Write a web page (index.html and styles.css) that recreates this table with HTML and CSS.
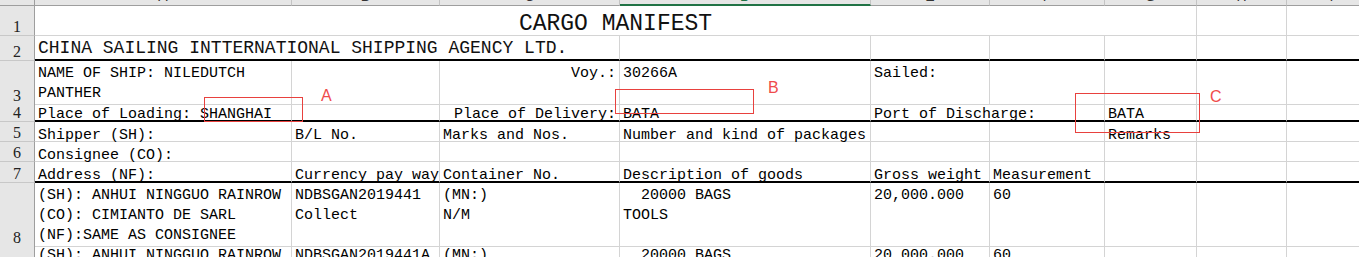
FILE: index.html
```html
<!DOCTYPE html>
<html>
<head>
<meta charset="utf-8">
<title>Cargo Manifest</title>
<link rel="stylesheet" href="styles.css">
</head>
<body>
<div class="sheet">
  <div class="row colhead">
    <div class="corner"></div>
    <div class="ch">A</div><div class="ch">B</div><div class="ch">C</div><div class="ch sel">D</div><div class="ch">E</div><div class="ch">F</div><div class="ch">G</div><div class="ch">H</div><div class="ch">I</div>
  </div>

  <div class="row r1">
    <div class="rh">1</div>
    <div class="c title s7">CARGO MANIFEST</div>
    <div class="c"></div><div class="c"></div>
  </div>

  <div class="row r2 thick">
    <div class="rh">2</div>
    <div class="c company s3">CHINA SAILING INTTERNATIONAL SHIPPING AGENCY LTD.</div>
    <div class="c"></div><div class="c"></div><div class="c"></div><div class="c"></div><div class="c"></div><div class="c"></div>
  </div>

  <div class="row r3 top">
    <div class="rh">3</div>
    <div class="c wrap">NAME OF SHIP: NILEDUTCH PANTHER</div>
    <div class="c"></div>
    <div class="c right">Voy.:</div>
    <div class="c">30266A</div>
    <div class="c">Sailed:</div>
    <div class="c"></div><div class="c"></div><div class="c"></div><div class="c"></div>
  </div>

  <div class="row r4 thick">
    <div class="rh">4</div>
    <div class="c">Place of Loading: SHANGHAI</div>
    <div class="c"></div>
    <div class="c right">Place of Delivery:</div>
    <div class="c">BATA</div>
    <div class="c s2">Port of Discharge:</div>
    <div class="c">BATA</div>
    <div class="c"></div><div class="c"></div>
  </div>

  <div class="row r5">
    <div class="rh">5</div>
    <div class="c">Shipper (SH):</div>
    <div class="c">B/L No.</div>
    <div class="c">Marks and Nos.</div>
    <div class="c">Number and kind of packages</div>
    <div class="c"></div><div class="c"></div>
    <div class="c">Remarks</div>
    <div class="c"></div><div class="c"></div>
  </div>

  <div class="row r6">
    <div class="rh">6</div>
    <div class="c">Consignee (CO):</div>
    <div class="c"></div><div class="c"></div><div class="c"></div><div class="c"></div><div class="c"></div><div class="c"></div><div class="c"></div><div class="c"></div>
  </div>

  <div class="row r7 thick">
    <div class="rh">7</div>
    <div class="c">Address (NF):</div>
    <div class="c">Currency pay way</div>
    <div class="c">Container No.</div>
    <div class="c">Description of goods</div>
    <div class="c">Gross weight</div>
    <div class="c">Measurement</div>
    <div class="c"></div><div class="c"></div><div class="c"></div>
  </div>

  <div class="row r8 top">
    <div class="rh">8</div>
    <div class="c">(SH): ANHUI NINGGUO RAINROW<br>(CO): CIMIANTO DE SARL<br>(NF):SAME AS CONSIGNEE</div>
    <div class="c">NDBSGAN2019441<br>Collect</div>
    <div class="c">(MN:)<br>N/M</div>
    <div class="c">  20000 BAGS<br>TOOLS</div>
    <div class="c">20,000.000</div>
    <div class="c">60</div>
    <div class="c"></div><div class="c"></div><div class="c"></div>
  </div>

  <div class="row r9 top">
    <div class="rh">9</div>
    <div class="c">(SH): ANHUI NINGGUO RAINROW</div>
    <div class="c">NDBSGAN2019441A</div>
    <div class="c">(MN:)</div>
    <div class="c">  20000 BAGS</div>
    <div class="c">20,000.000</div>
    <div class="c">60</div>
    <div class="c"></div><div class="c"></div><div class="c"></div>
  </div>

  <div class="mark m-a"></div>
  <div class="lbl l-a">A</div>
  <div class="mark m-b"></div>
  <div class="lbl l-b">B</div>
  <div class="mark m-c"></div>
  <div class="lbl l-c">C</div>
</div>
</body>
</html>
```

FILE: styles.css
```css
* { box-sizing: border-box; }
html, body { margin: 0; padding: 0; background: #fff; }
body { width: 1359px; height: 257px; overflow: hidden; }

.sheet {
  position: relative;
  width: 1377px;
  display: flex;
  flex-direction: column;
  font-family: "Liberation Mono", "Noto Sans CJK SC", monospace;
  font-size: 15px;
  color: #000;
}

.row {
  flex: none;
  display: grid;
  grid-template-columns: 35px 257px 148px 180px 251px 119px 115px 92px 90px 90px;
}

/* column header (mostly scrolled out of view) */
.colhead { height: 20px; margin-top: -14px; }
.corner {
  background: #e6e6e6;
  border-right: 1px solid #9e9e9e;
  border-bottom: 1px solid #9e9e9e;
}
.ch {
  background: #e6e6e6;
  border-right: 1px solid #c4c4c4;
  border-bottom: 1px solid #9e9e9e;
  font-family: "Liberation Sans", sans-serif;
  font-size: 14px;
  line-height: 16px;
  padding-top: 2px;
  text-align: center;
  color: #333;
}
.ch.sel { color: #217346; border-bottom: 2px solid #217346; }

/* row header */
.rh {
  background: #e6e6e6;
  border-right: 1px solid #9e9e9e;
  border-bottom: 1px solid #c8c8c8;
  display: flex;
  align-items: flex-end;
  justify-content: center;
  font-family: "Liberation Serif", serif;
  font-size: 16px;
  line-height: 16px;
  color: #222;
}

/* cells */
.c {
  border-right: 1px solid #d4d4d4;
  border-bottom: 1px solid #d4d4d4;
  padding: 0 3px;
  display: flex;
  align-items: flex-end;
  line-height: 11px;
  white-space: pre;
  min-width: 0;
}
.top .c {
  display: block;
  line-height: 20px;
  padding-top: 3px;
}
.thick .c { border-bottom: 2px solid #000; }

.r1 { height: 30px; }
.r2 { height: 25px; }
.r3 { height: 40px; }
.r4 { height: 21px; }
.r5, .r6 { height: 20px; }
.r7 { height: 21px; }
.r8 { height: 60px; }
.r9 { height: 40px; }

.s7 { grid-column: span 7; }
.s3 { grid-column: span 3; }
.s2 { grid-column: span 2; }

.title {
  justify-content: center;
  font-size: 23px;
  line-height: 22px;
  color: #111;
}
.company {
  font-size: 18px;
  line-height: 22px;
  color: #111;
}
.right { justify-content: flex-end; }
.top .c.right { text-align: right; }
.wrap { white-space: normal; }

/* red annotation overlays */
.mark {
  position: absolute;
  border: 1px solid #e8413e;
}
.m-a { left: 204px; top: 97px; width: 99px; height: 25px; }
.m-b { left: 615px; top: 89px; width: 139px; height: 25px; }
.m-c { left: 1075px; top: 93px; width: 125px; height: 40px; }

.lbl {
  position: absolute;
  font-family: "Liberation Sans", sans-serif;
  font-size: 16px;
  line-height: 16px;
  color: #ef4b4b;
}
.l-a { left: 321px; top: 88px; }
.l-b { left: 768px; top: 80px; }
.l-c { left: 1210px; top: 89px; }
```
